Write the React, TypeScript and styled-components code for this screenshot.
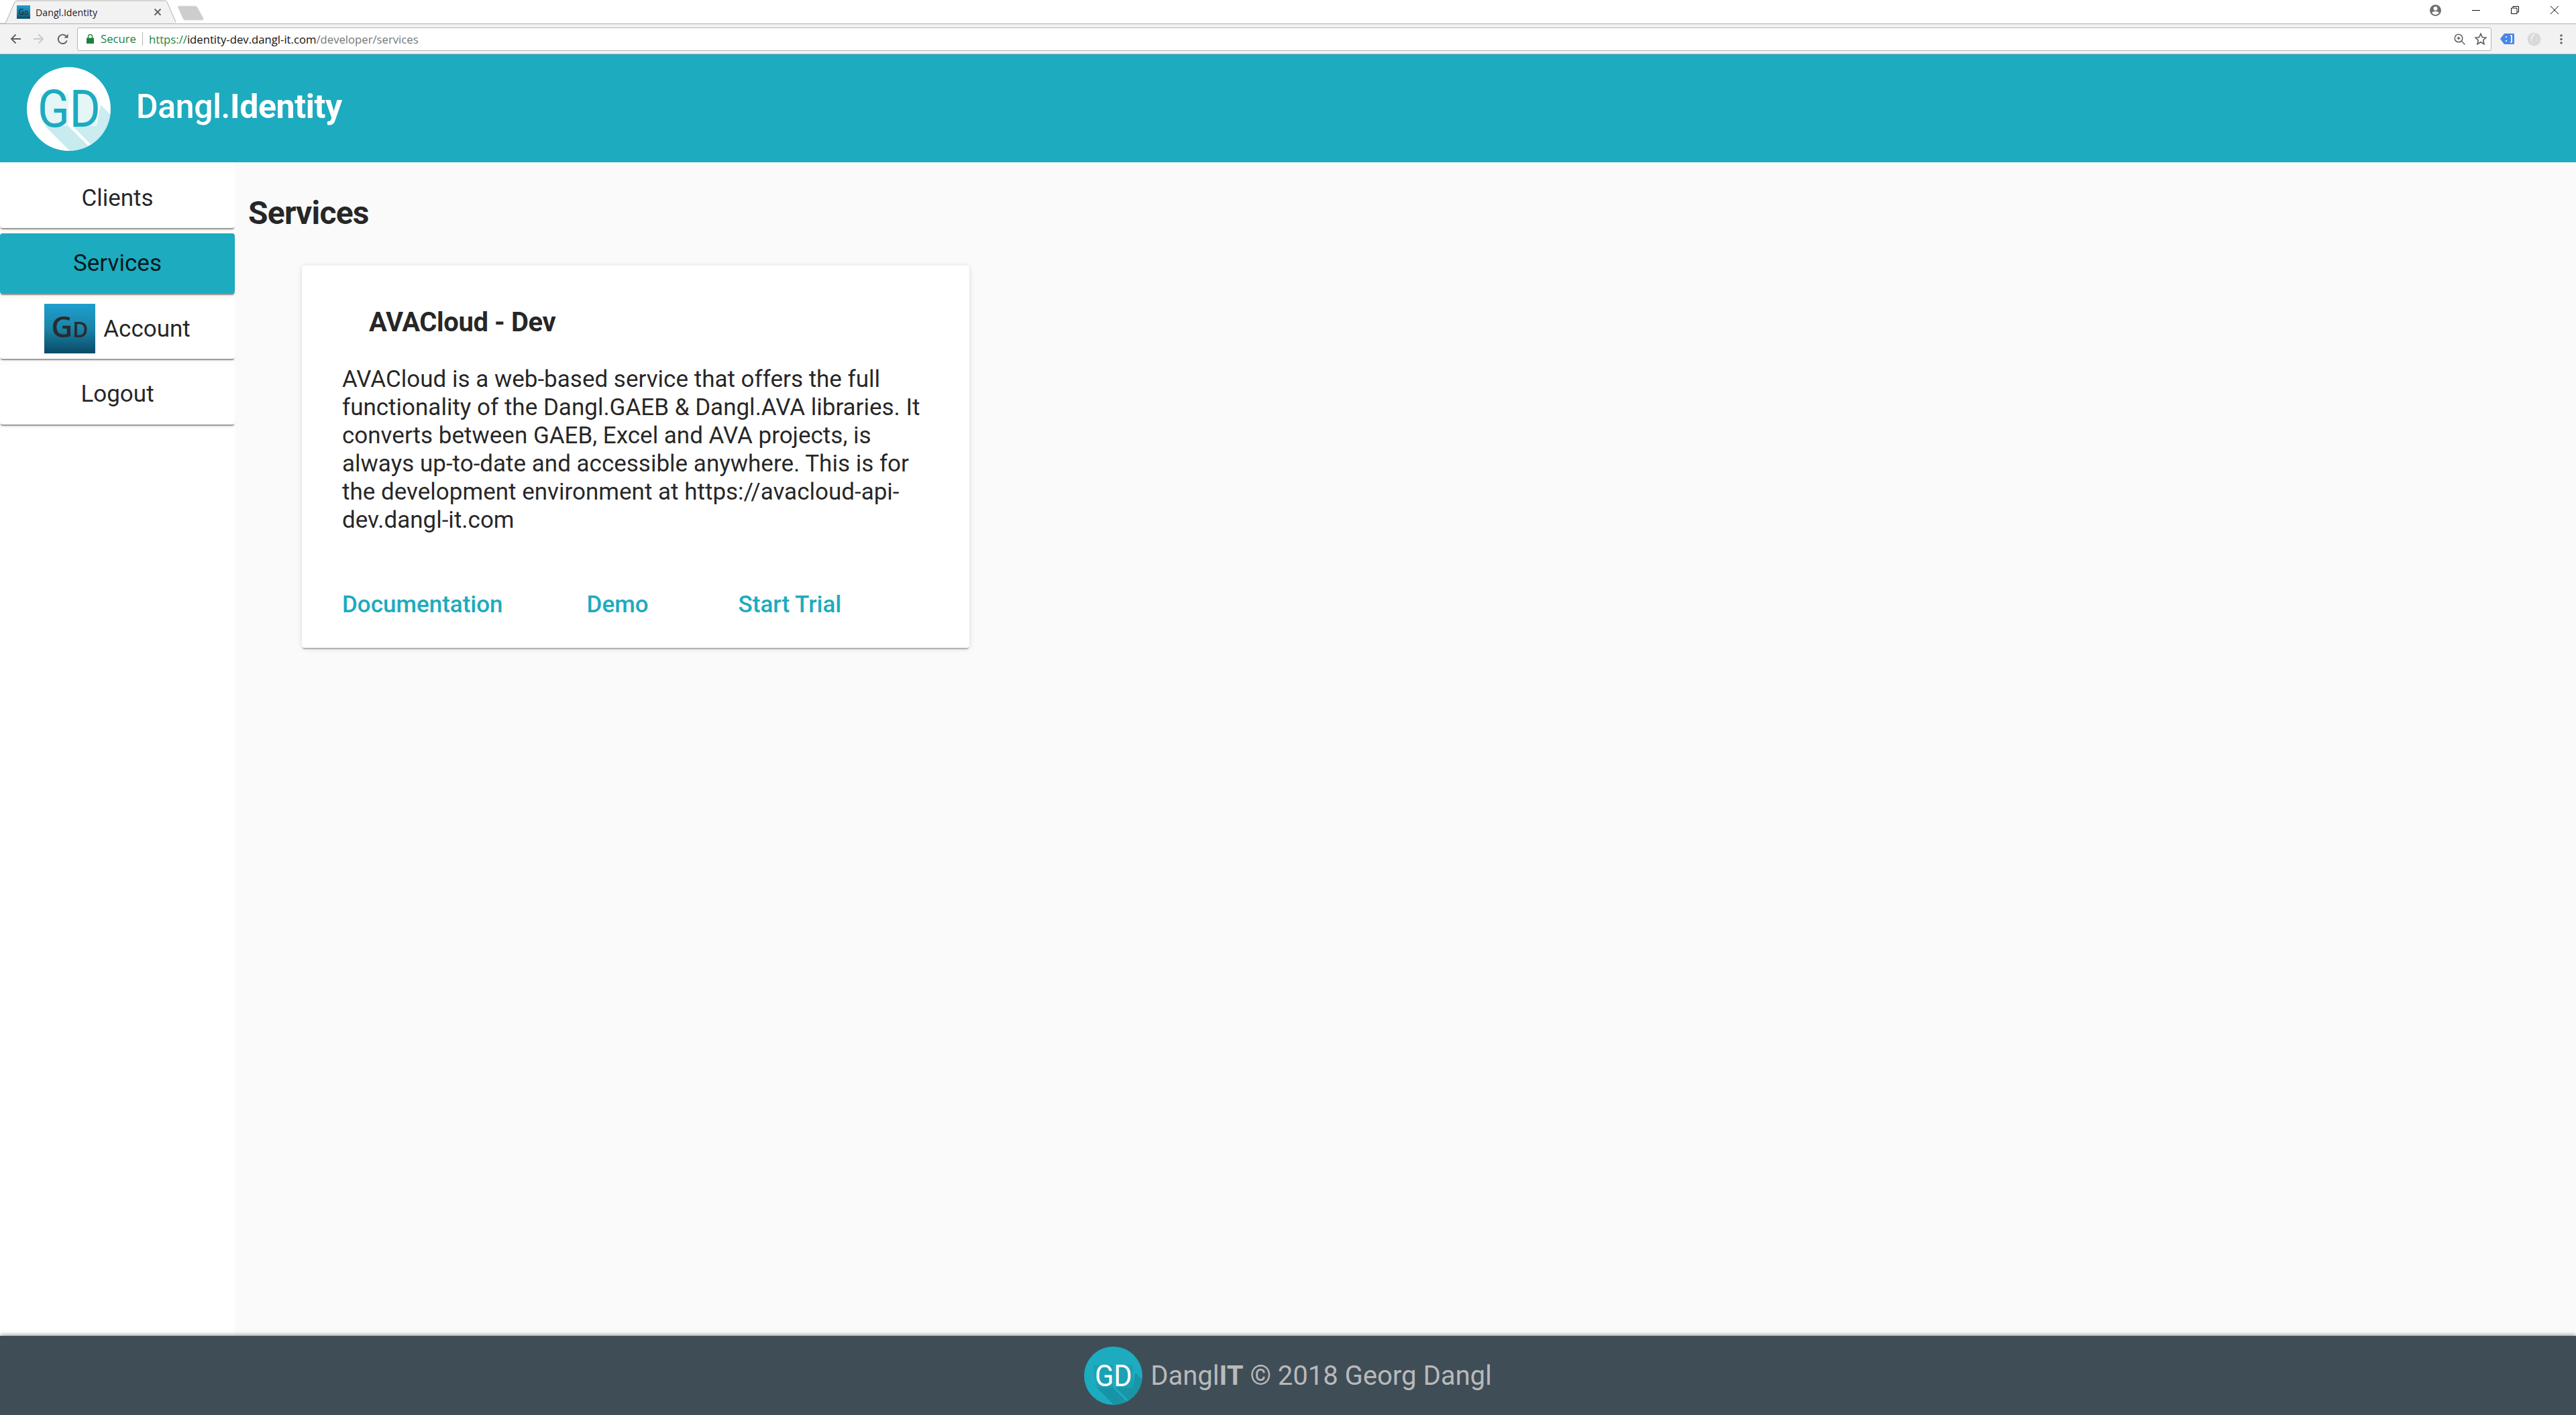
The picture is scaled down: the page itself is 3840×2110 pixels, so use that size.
import React from "react";
import styled, { createGlobalStyle } from "styled-components";

const TEAL = "#1dabbf";

const GlobalStyle = createGlobalStyle`
  html, body {
    margin: 0;
    padding: 0;
    background: #fafafa;
    font-family: Roboto, "Liberation Sans", sans-serif;
  }
  * { box-sizing: border-box; }
`;

const Page = styled.div`
  display: flex;
  flex-direction: column;
  width: 3840px;
  height: 2110px;
  overflow: hidden;
`;

/* browser chrome */
const TabStrip = styled.div`
  display: flex;
  align-items: flex-start;
  justify-content: space-between;
  height: 36px;
  background: #fff;
  border-bottom: 1px solid #b0b0b0;
`;

const TabRow = styled.div`
  display: flex;
  align-items: flex-start;
`;

const Tab = styled.div`
  position: relative;
  display: flex;
  align-items: center;
  width: 262px;
  height: 36px;
  padding: 0 21px 0 25px;
  font-family: "Open Sans", "Noto Sans", sans-serif;
  font-size: 14.2px;
  color: #1c1c30;
`;

const TabShape = styled.svg`
  position: absolute;
  left: 0;
  top: 0;
`;

const Favicon = styled.span`
  position: relative;
  display: flex;
  margin-right: 8px;
`;

const TabTitle = styled.span`
  position: relative;
  flex: 1;
`;

const TabClose = styled.svg`
  position: relative;
`;

const NewTab = styled.svg`
  margin: 8px 0 0 0;
`;

const WindowControls = styled.div`
  display: flex;
  align-items: center;
  height: 30px;
  padding-right: 26px;
`;

const WinButton = styled.svg<{ $gap: number }>`
  margin-left: ${(p) => p.$gap}px;
`;

const Toolbar = styled.div`
  display: flex;
  align-items: center;
  height: 45px;
  padding: 0 19px 0 15px;
  background: #f2f2f2;
  border-bottom: 1px solid #b8b8b8;
`;

const NavIcon = styled.svg<{ $gap: number }>`
  flex: none;
  margin-right: ${(p) => p.$gap}px;
`;

const AddressBar = styled.div`
  display: flex;
  flex: 1;
  align-items: center;
  height: 35px;
  padding: 0 6px 0 13px;
  background: #fff;
  border: 1px solid #b4b4b4;
  border-radius: 3px;
  font-family: "Open Sans", "Noto Sans", sans-serif;
  font-size: 16.7px;
`;

const SecureLabel = styled.span`
  margin-left: 10px;
  padding-right: 9px;
  border-right: 1px solid #b4b4b4;
  color: #1f7f40;
  line-height: 20px;
`;

const UrlText = styled.span`
  flex: 1;
  margin-left: 9px;
  color: #767676;
  white-space: nowrap;
`;

const UrlScheme = styled.span`
  color: #1f7f40;
`;

const UrlHost = styled.span`
  color: #111;
`;

const BarIcon = styled.svg<{ $gap: number }>`
  flex: none;
  margin-left: ${(p) => p.$gap}px;
`;

/* app header */
const Header = styled.header`
  display: flex;
  align-items: center;
  flex: none;
  height: 161px;
  padding: 2px 0 0 40px;
  background: ${TEAL};
`;

const BrandName = styled.h1`
  margin: 0 0 7px 38px;
  font-size: 50px;
  line-height: 60px;
  font-weight: 500;
  letter-spacing: -0.4px;
  color: #fff;
`;

const BrandStrong = styled.span`
  font-weight: 700;
`;

/* body */
const Body = styled.div`
  display: flex;
  flex: 1;
  min-height: 0;
`;

const Sidebar = styled.nav`
  display: flex;
  flex-direction: column;
  flex: none;
  gap: 7.5px;
  width: 350px;
  padding-top: 8px;
  background: #fff;
`;

const NavItem = styled.a<{ $active?: boolean }>`
  display: flex;
  align-items: center;
  justify-content: center;
  height: 90px;
  gap: 12px;
  border-radius: 4px;
  background: ${(p) => (p.$active ? TEAL : "#fff")};
  box-shadow: 0 3px 1px -1px rgba(0, 0, 0, 0.3), 0 2px 4px rgba(0, 0, 0, 0.2);
  font-size: 35px;
  color: rgba(0, 0, 0, 0.87);
`;

const Main = styled.main`
  flex: 1;
  padding: 41px 20px 0;
  background: #fafafa;
`;

const PageTitle = styled.h2`
  margin: 0 0 43px;
  font-size: 48px;
  line-height: 70px;
  font-weight: 700;
  letter-spacing: -0.8px;
  color: rgba(0, 0, 0, 0.87);
`;

const Card = styled.section`
  display: flex;
  flex-direction: column;
  width: 995px;
  height: 570px;
  margin-left: 80px;
  padding: 61px 60px 0;
  background: #fff;
  border-radius: 4px;
  box-shadow: 0 3px 2px -1px rgba(0, 0, 0, 0.28), 0 1px 8px rgba(0, 0, 0, 0.12);
`;

const CardTitle = styled.h3`
  margin: 0 0 40px 40px;
  font-size: 40px;
  line-height: 48px;
  font-weight: 700;
  letter-spacing: -0.4px;
  color: rgba(0, 0, 0, 0.87);
`;

const CardText = styled.p`
  margin: 0;
  font-size: 35px;
  line-height: 42px;
  color: rgba(0, 0, 0, 0.87);
`;

const CardLinks = styled.div`
  display: flex;
  gap: 125px;
  margin-top: 84px;
`;

const CardLink = styled.a<{ $shift?: number }>`
  margin-left: ${(p) => p.$shift ?? 0}px;
  font-size: 35px;
  line-height: 42px;
  font-weight: 500;
  color: ${TEAL};
`;

const Footer = styled.footer`
  position: relative;
  display: flex;
  flex: none;
  align-items: center;
  justify-content: center;
  gap: 12px;
  height: 118px;
  background: #3f4d57;
  box-shadow: 0 -1px 6px rgba(0, 0, 0, 0.45);
  font-size: 40px;
  color: #b9b9b9;
`;

const FooterStrong = styled.strong`
  font-weight: 700;
`;

type LogoProps = {
  id: string;
  size: number;
  bg: string;
  fg: string;
  shadow: string;
  fontSize: number;
  textWidth: number;
  baseline: number;
};

// round GD mark with the long diagonal shadow behind the letters
const LogoMark = ({ id, size, bg, fg, shadow, fontSize, textWidth, baseline }: LogoProps) => (
  <svg width={size} height={size} viewBox="0 0 125 125">
    <defs>
      <clipPath id={id}>
        <circle cx="62.5" cy="62.5" r="62.5" />
      </clipPath>
    </defs>
    <circle cx="62.5" cy="62.5" r="62.5" fill={bg} />
    <g clipPath={`url(#${id})`} fill={shadow}>
      <polygon points="27,88 65,126 100,126 62,88" opacity="0.65" />
      <polygon points="68,88 106,126 126,126 126,72 110,56 104,88" opacity="0.6" />
      <polygon points="20,40 62,40 62,88 27,88" opacity="0.3" />
      <polygon points="68,40 104,40 104,88 68,88" opacity="0.3" />
    </g>
    <text
      x="63"
      y={baseline}
      textAnchor="middle"
      fontFamily="Roboto, sans-serif"
      fontSize={fontSize}
      fontWeight="400"
      textLength={textWidth}
      lengthAdjust="spacingAndGlyphs"
      fill={fg}
    >
      GD
    </text>
  </svg>
);

const GdSquare = ({ w, h, font, id }: { w: number; h: number; font: number; id: string }) => (
  <svg width={w} height={h} viewBox={`0 0 ${w} ${h}`}>
    <defs>
      <linearGradient id={id} x1="0" y1="0" x2="0" y2="1">
        <stop offset="0" stopColor="#1e9fcf" />
        <stop offset="0.5" stopColor="#1a84a8" />
        <stop offset="1" stopColor="#0a4a66" />
      </linearGradient>
    </defs>
    <rect width={w} height={h} fill={`url(#${id})`} />
    <text
      x={w / 2}
      y={h * 0.68}
      textAnchor="middle"
      fontFamily="'Open Sans', sans-serif"
      fontWeight="600"
      fontSize={font}
      fill="#2a2a2e"
    >
      G<tspan fontSize={font * 0.72}>D</tspan>
    </text>
  </svg>
);

export default function App() {
  return (
    <Page>
      <GlobalStyle />
      <TabStrip>
        <TabRow>
          <Tab>
            <TabShape width="262" height="36" viewBox="0 0 262 36">
              <path d="M0 35 H8 L22 3 Q23 1 26 1 H245 Q248 1 249 3 L263 35" fill="#f2f2f2" stroke="#b0b0b0" strokeWidth="1" />
            </TabShape>
            <Favicon>
              <GdSquare w={20} h={20} font={12} id="fav" />
            </Favicon>
            <TabTitle>Dangl.Identity</TabTitle>
            <TabClose width="12" height="12" viewBox="0 0 12 12">
              <path d="M1.5 1.5 L10.5 10.5 M10.5 1.5 L1.5 10.5" stroke="#5f5f5f" strokeWidth="1.8" />
            </TabClose>
          </Tab>
          <NewTab width="43" height="23" viewBox="0 0 43 23">
            <path d="M3 2 Q3 1 5 1 H29 Q31 1 32 3 L41 19 Q42 22 39 22 H14 Q12 22 11 20 Z" fill="#cdcdcd" stroke="#dedede" />
          </NewTab>
        </TabRow>
        <WindowControls>
          <svg width="17" height="17" viewBox="0 0 24 24">
            <path
              d="M12 0 A12 12 0 1 0 12 24 A12 12 0 1 0 12 0 Z M12 4 A4 4 0 1 1 12 12.4 A4 4 0 1 1 12 4 Z M12 21 C9 21 6 19.6 4.5 17 C5 14.8 9.5 14 12 14 C14.5 14 19 14.8 19.5 17 C18 19.6 15 21 12 21 Z"
              fill="#6e6e6e"
              fillRule="evenodd"
            />
          </svg>
          <WinButton $gap={46} width="12" height="12" viewBox="0 0 12 12">
            <path d="M0 6.5 H12" stroke="#111" strokeWidth="1" />
          </WinButton>
          <WinButton $gap={46} width="12" height="12" viewBox="0 0 12 12">
            <path d="M0.5 3 H9 V11.5 H0.5 Z M3 3 V0.5 H11.5 V9 H9" fill="none" stroke="#111" strokeWidth="1" />
          </WinButton>
          <WinButton $gap={47} width="12" height="12" viewBox="0 0 12 12">
            <path d="M0 0 L12 12 M12 0 L0 12" stroke="#111" strokeWidth="1" />
          </WinButton>
        </WindowControls>
      </TabStrip>

      <Toolbar>
        <NavIcon $gap={19} width="16" height="16" viewBox="0 0 16 16">
          <path d="M16 8 H2 M8.5 1.5 L2 8 L8.5 14.5" fill="none" stroke="#5f5f5f" strokeWidth="1.8" />
        </NavIcon>
        <NavIcon $gap={19} width="16" height="16" viewBox="0 0 16 16">
          <path d="M0 8 H14 M7.5 1.5 L14 8 L7.5 14.5" fill="none" stroke="#c8c8c8" strokeWidth="1.8" />
        </NavIcon>
        <NavIcon $gap={13} width="17" height="17" viewBox="0 0 17 17">
          <path d="M14.8 10.5 A6.7 6.7 0 1 1 13.2 3.6" fill="none" stroke="#5f5f5f" strokeWidth="1.9" />
          <path d="M10.5 6.5 H16.5 V0.5 Z" fill="#5f5f5f" />
        </NavIcon>
        <AddressBar>
          <svg width="11" height="14" viewBox="0 0 11 14">
            <path d="M0 5.5 H11 V14 H0 Z" fill="#1f7f40" />
            <path d="M2.5 6 V3.5 A3 3 0 0 1 8.5 3.5 V6" fill="none" stroke="#1f7f40" strokeWidth="1.4" />
          </svg>
          <SecureLabel>Secure</SecureLabel>
          <UrlText>
            <UrlScheme>https://</UrlScheme>
            <UrlHost>identity-dev.dangl-it.com</UrlHost>/developer/services
          </UrlText>
          <BarIcon $gap={0} width="17" height="17" viewBox="0 0 17 17">
            <circle cx="7" cy="7" r="5.8" fill="none" stroke="#5f5f5f" strokeWidth="1.5" />
            <path d="M11 11 L16.5 16.5 M4.5 7 H9.5 M7 4.5 V9.5" stroke="#5f5f5f" strokeWidth="1.4" />
          </BarIcon>
          <BarIcon $gap={14} width="18" height="18" viewBox="0 0 18 18">
            <path
              d="M9 1.2 L11.3 6.6 L17 7.1 L12.7 11 L14 16.8 L9 13.7 L4 16.8 L5.3 11 L1 7.1 L6.7 6.6 Z"
              fill="none"
              stroke="#5f5f5f"
              strokeWidth="1.6"
            />
          </BarIcon>
        </AddressBar>
        <BarIcon $gap={13} width="21" height="16" viewBox="0 0 21 16">
          <path d="M6 0 H20 Q21 0 21 1 V15 Q21 16 20 16 H6 L0 8 Z" fill="#4a86e8" />
          <path d="M9 4 V6 M9 10 V12 M15 3 H17 V13 H15" stroke="#fff" strokeWidth="1.7" fill="none" />
        </BarIcon>
        <BarIcon $gap={19} width="21" height="21" viewBox="0 0 21 21">
          <circle cx="10.5" cy="10.5" r="10" fill="#d9d9d9" />
          <path d="M13 1 C7 3 4 9 7 18 C5 10 10 5 13 1 Z M9 19 C14 17 16 11 14 5 C17 10 14 17 9 19 Z" fill="#f6f6f6" />
        </BarIcon>
        <BarIcon $gap={27} width="6" height="17" viewBox="0 0 6 17">
          <circle cx="3" cy="3" r="1.8" fill="#666" />
          <circle cx="3" cy="8.5" r="1.8" fill="#666" />
          <circle cx="3" cy="14" r="1.8" fill="#666" />
        </BarIcon>
      </Toolbar>

      <Header>
        <LogoMark
          id="header-logo"
          size={125}
          bg="#fff"
          fg={TEAL}
          shadow="#a9e0e6"
          fontSize={78}
          textWidth={94}
          baseline={89}
        />
        <BrandName>
          Dangl.<BrandStrong>Identity</BrandStrong>
        </BrandName>
      </Header>

      <Body>
        <Sidebar>
          <NavItem>Clients</NavItem>
          <NavItem $active>Services</NavItem>
          <NavItem>
            <GdSquare w={76} h={74} font={44} id="avatar" />
            Account
          </NavItem>
          <NavItem>Logout</NavItem>
        </Sidebar>
        <Main>
          <PageTitle>Services</PageTitle>
          <Card>
            <CardTitle>AVACloud - Dev</CardTitle>
            <CardText>
              AVACloud is a web-based service that offers the full functionality of the Dangl.GAEB &amp; Dangl.AVA
              libraries. It converts between GAEB, Excel and AVA projects, is always up-to-date and accessible anywhere.
              This is for the development environment at https://avacloud-api-dev.dangl-it.com
            </CardText>
            <CardLinks>
              <CardLink>Documentation</CardLink>
              <CardLink>Demo</CardLink>
              <CardLink $shift={9}>Start Trial</CardLink>
            </CardLinks>
          </Card>
        </Main>
      </Body>

      <Footer>
        <LogoMark
          id="footer-logo"
          size={87}
          bg={TEAL}
          fg="#fff"
          shadow="#17879a"
          fontSize={65}
          textWidth={80}
          baseline={85}
        />
        <span>
          Dangl<FooterStrong>IT</FooterStrong> © 2018 Georg Dangl
        </span>
      </Footer>
    </Page>
  );
}
